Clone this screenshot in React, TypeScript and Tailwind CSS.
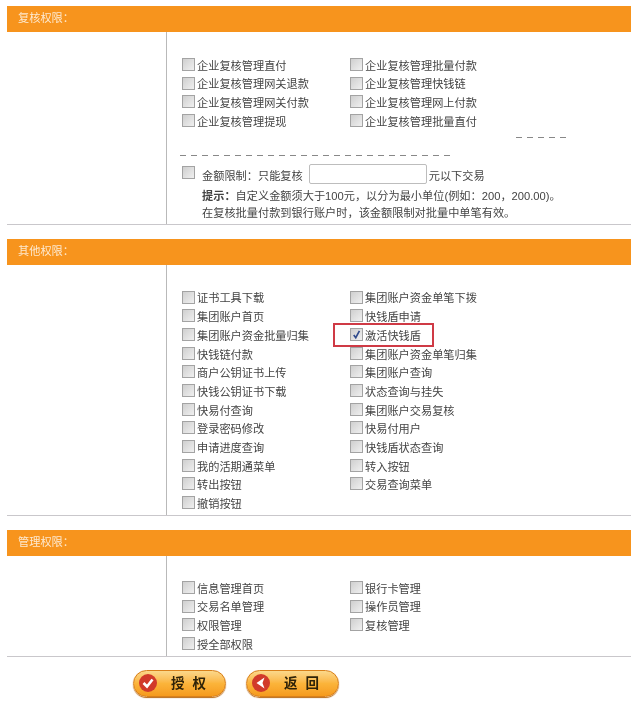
import React from 'react';

const FONT = "font-['Liberation_Sans','Noto_Sans_CJK_SC',sans-serif]";

function Box({ checked = false }: { checked?: boolean }) {
  return (
    <span className="mb-[2px] flex h-[13px] w-[13px] shrink-0 items-center justify-center border border-[#a3a3a3] bg-gradient-to-br from-[#cfcfcf] to-[#f0f0f0]">
      {checked && (
        <svg viewBox="0 0 12 12" className="h-[11px] w-[11px]">
          <path d="M3 6.5 L5.2 9.5 L9.2 2" fill="none" stroke="#2f4a8c" strokeWidth="1.8" />
        </svg>
      )}
    </span>
  );
}

function Item({ label, checked, boxed }: { label: string; checked?: boolean; boxed?: boolean }) {
  return (
    <div className="relative flex h-[18.7px] items-center gap-[2px] whitespace-nowrap">
      <Box checked={checked} />
      <span className="mt-[2px]">{label}</span>
      {boxed && (
        <span className="absolute left-[-17px] top-[-3px] h-[24px] w-[101px] border-[2px] border-[#cf3a45]" />
      )}
    </div>
  );
}

function Section({
  title,
  bodyClass,
  children,
}: {
  title: string;
  bodyClass: string;
  children: React.ReactNode;
}) {
  return (
    <section>
      <div className="flex h-[26px] items-center bg-[#f7941d] pl-[11px] text-[11.2px] text-[#fde9cf]">{title}</div>
      <div className="flex border-b border-[#c9c7cb]">
        <div className="w-[160px] shrink-0 border-r border-[#b9b9b9]" />
        <div className={`flex-1 pl-[15px] ${bodyClass}`}>{children}</div>
      </div>
    </section>
  );
}

function Grid({ items }: { items: { label: string; checked?: boolean; boxed?: boolean }[] }) {
  return (
    <div className="grid grid-cols-[168px_1fr]">
      {items.map((it) => (
        <Item key={it.label} {...it} />
      ))}
    </div>
  );
}

function PillButton({ label, icon }: { label: string; icon: React.ReactNode }) {
  return (
    <button className="flex h-[27px] w-[93px] items-center rounded-full border border-[#d9801a] bg-gradient-to-b from-[#fbd88a] via-[#fbb43a] to-[#f59a1c] pl-[5px] shadow-[0_1px_1px_#b96a14]">
      <span className="flex h-[18px] w-[18px] items-center justify-center rounded-full bg-[#d13a2a]">{icon}</span>
      <span className="ml-[14px] text-[13.5px] font-bold tracking-[8px] text-[#2e2208]">{label}</span>
    </button>
  );
}

const REVIEW = [
  { label: '企业复核管理直付' },
  { label: '企业复核管理批量付款' },
  { label: '企业复核管理网关退款' },
  { label: '企业复核管理快钱链' },
  { label: '企业复核管理网关付款' },
  { label: '企业复核管理网上付款' },
  { label: '企业复核管理提现' },
  { label: '企业复核管理批量直付' },
];

const OTHER = [
  { label: '证书工具下载' },
  { label: '集团账户资金单笔下拨' },
  { label: '集团账户首页' },
  { label: '快钱盾申请' },
  { label: '集团账户资金批量归集' },
  { label: '激活快钱盾', checked: true, boxed: true },
  { label: '快钱链付款' },
  { label: '集团账户资金单笔归集' },
  { label: '商户公钥证书上传' },
  { label: '集团账户查询' },
  { label: '快钱公钥证书下载' },
  { label: '状态查询与挂失' },
  { label: '快易付查询' },
  { label: '集团账户交易复核' },
  { label: '登录密码修改' },
  { label: '快易付用户' },
  { label: '申请进度查询' },
  { label: '快钱盾状态查询' },
  { label: '我的活期通菜单' },
  { label: '转入按钮' },
  { label: '转出按钮' },
  { label: '交易查询菜单' },
  { label: '撤销按钮' },
];

const MANAGE = [
  { label: '信息管理首页' },
  { label: '银行卡管理' },
  { label: '交易名单管理' },
  { label: '操作员管理' },
  { label: '权限管理' },
  { label: '复核管理' },
  { label: '授全部权限' },
];

export default function App() {
  return (
    <div className={`${FONT} h-[710px] w-[639px] overflow-hidden bg-white pl-[7px] pr-[8px] pt-[6px] text-[11.2px] leading-none text-[#444] blur-[0.4px]`}>
      <div className="flex flex-col gap-[14px]">
        <Section title="复核权限：" bodyClass="pt-[24px] pb-[2px]">
          <Grid items={REVIEW} />
          <div className="ml-[334px] mt-[6px] h-px w-[52px] bg-[repeating-linear-gradient(90deg,#888_0_6px,transparent_6px_11px)]" />
          <div className="ml-[-2px] mt-[17px] h-px w-[275px] bg-[repeating-linear-gradient(90deg,#888_0_6px,transparent_6px_11px)]" />
          <div className="mt-[8px] flex items-center">
            <Box />
            <span className="ml-[7px] mt-[5px]">金额限制：只能复核</span>
            <span className="ml-[6px] h-[20px] w-[118px] rounded-[2px] border border-[#bdbdbd] bg-white" />
            <span className="ml-[2px] mt-[5px]">元以下交易</span>
          </div>
          <p className="ml-[20px] mt-[4px] leading-[17px]">
            <b>提示：</b>自定义金额须大于100元，以分为最小单位(例如：200，200.00)。
            <br />
            在复核批量付款到银行账户时，该金额限制对批量中单笔有效。
          </p>
        </Section>
        <Section title="其他权限：" bodyClass="pt-[24px] pb-[2px]">
          <Grid items={OTHER} />
        </Section>
        <Section title="管理权限：" bodyClass="pt-[23px] pb-[2px]">
          <Grid items={MANAGE} />
        </Section>
      </div>
      <div className="ml-[126px] mt-[13px] flex gap-[20px]">
        <PillButton
          label="授权"
          icon={
            <svg viewBox="0 0 18 18" className="h-[18px] w-[18px]">
              <path d="M4.5 9 L8 12.5 L13.5 5.5" fill="none" stroke="#fff" strokeWidth="2.6" />
            </svg>
          }
        />
        <PillButton
          label="返回"
          icon={
            <svg viewBox="0 0 18 18" className="h-[18px] w-[18px]">
              <path d="M12.5 3.5 L4.5 9 L12.5 14.5 L10.5 9 Z" fill="#fff" />
            </svg>
          }
        />
      </div>
    </div>
  );
}
